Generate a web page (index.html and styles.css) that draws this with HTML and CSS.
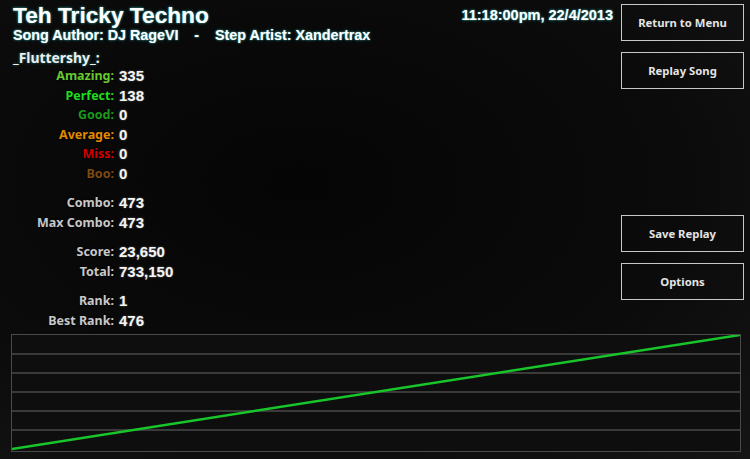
FILE: index.html
```html
<!DOCTYPE html>
<html lang="en">
<head>
  <meta charset="UTF-8">
  <meta name="viewport" content="width=device-width, initial-scale=1.0">
  <title>Results</title>
  <link rel="stylesheet" href="styles.css">
</head>
<body>
<div class="screen">
  <div class="top">
    <div class="main">
      <header class="head">
        <div class="song">
          <h1 class="title">Teh Tricky Techno</h1>
          <p class="credits">Song Author: DJ RageVI    -    Step Artist: Xandertrax</p>
        </div>
        <div class="date">11:18:00pm, 22/4/2013</div>
      </header>
      <div class="player">_Fluttershy_:</div>
      <div class="stats">
        <span class="label amazing">Amazing:</span><span class="value">335</span>
        <span class="label perfect">Perfect:</span><span class="value">138</span>
        <span class="label good">Good:</span><span class="value">0</span>
        <span class="label average">Average:</span><span class="value">0</span>
        <span class="label miss">Miss:</span><span class="value">0</span>
        <span class="label boo">Boo:</span><span class="value">0</span>
      </div>
      <div class="stats">
        <span class="label">Combo:</span><span class="value">473</span>
        <span class="label">Max Combo:</span><span class="value">473</span>
      </div>
      <div class="stats">
        <span class="label">Score:</span><span class="value">23,650</span>
        <span class="label">Total:</span><span class="value">733,150</span>
      </div>
      <div class="stats">
        <span class="label">Rank:</span><span class="value">1</span>
        <span class="label">Best Rank:</span><span class="value">476</span>
      </div>
    </div>
    <!-- menu buttons -->
    <div class="side">
      <button class="btn">Return to Menu</button>
      <button class="btn">Replay Song</button>
      <button class="btn lower">Save Replay</button>
      <button class="btn">Options</button>
    </div>
  </div>
  <div class="graph">
    <svg viewBox="0 0 730 116" preserveAspectRatio="none">
      <line class="grid" x1="0" y1="19" x2="730" y2="19"/>
      <line class="grid" x1="0" y1="38" x2="730" y2="38"/>
      <line class="grid" x1="0" y1="57" x2="730" y2="57"/>
      <line class="grid" x1="0" y1="76" x2="730" y2="76"/>
      <line class="grid" x1="0" y1="95" x2="730" y2="95"/>
      <line class="life" x1="0" y1="114" x2="730" y2="0"/>
    </svg>
  </div>
</div>
</body>
</html>
```

FILE: styles.css
```css
body {
  margin: 0;
  background: #0a0a0a;
  font-family: "Liberation Sans", Arial, sans-serif;
  color: #fff;
}
.screen {
  width: 750px;
  height: 459px;
  overflow: hidden;
  background: radial-gradient(ellipse at 40% 40%, #050505 0%, #0b0b0b 60%, #151515 100%);
}
.top {
  display: flex;
  height: 334px;
}
.main {
  flex: 1;
  padding-left: 13px;
}
.head {
  display: flex;
  justify-content: space-between;
  padding-right: 8px;
}
.title {
  margin: 2px 0 0;
  font-size: 22.7px;
  line-height: 26px;
  text-shadow: 0 0 3px #2c8c8c, 0 0 1px #5cc;
}
.credits {
  margin: 0;
  font-size: 14.3px;
  font-weight: bold;
  line-height: 14px;
  white-space: pre;
  text-shadow: 0 0 3px #2c8c8c, 0 0 1px #5cc;
}
.date {
  margin-top: 7px;
  font-size: 14.5px;
  font-weight: bold;
  text-shadow: 0 0 3px #2c8c8c, 0 0 1px #5cc;
}
.player {
  margin-top: 8px;
  font-family: "Noto Sans", "Open Sans", sans-serif;
  font-size: 13.9px;
  font-weight: bold;
  line-height: 16px;
  color: #eee;
  text-shadow: 0 0 3px #2c7c7c;
}
.stats {
  display: grid;
  grid-template-columns: 101px auto;
  column-gap: 5px;
  margin-bottom: 10px;
  line-height: 19.5px;
}
.label {
  text-align: right;
  font-family: "Noto Sans", "Open Sans", sans-serif;
  font-size: 12.5px;
  font-weight: bold;
  color: #c8c8c8;
  text-shadow: 0 0 2px #000;
}
.value {
  font-size: 15px;
  font-weight: bold;
  color: #f4f4f4;
  text-shadow: 0 0 2px #6a6a6a;
}
.amazing { color: #66c92e; }
.perfect { color: #1fdc1f; }
.good { color: #1a9a1a; }
.average { color: #e08a00; }
.miss { color: #d00000; }
.boo { color: #7d4a12; }
.side {
  width: 123px;
  margin-right: 6px;
  padding-top: 4px;
  display: flex;
  flex-direction: column;
}
.btn {
  height: 37px;
  margin-bottom: 11px;
  background: transparent;
  border: 1.5px solid #c8c8c8;
  color: #e4e4e4;
  font-family: "Noto Sans", "Open Sans", sans-serif;
  font-size: 11.3px;
  font-weight: bold;
  cursor: pointer;
}
.btn.lower {
  margin-top: 115px;
}
.graph {
  margin: 0 9px 0 11px;
  height: 116px;
  border: 1.5px solid #4a4a4a;
  background: #0e0e0e;
}
.graph svg {
  display: block;
  width: 100%;
  height: 100%;
}
.grid {
  stroke: #4a4a4a;
  stroke-width: 1.5;
}
.life {
  stroke: #18c52a;
  stroke-width: 2.5;
}
```
